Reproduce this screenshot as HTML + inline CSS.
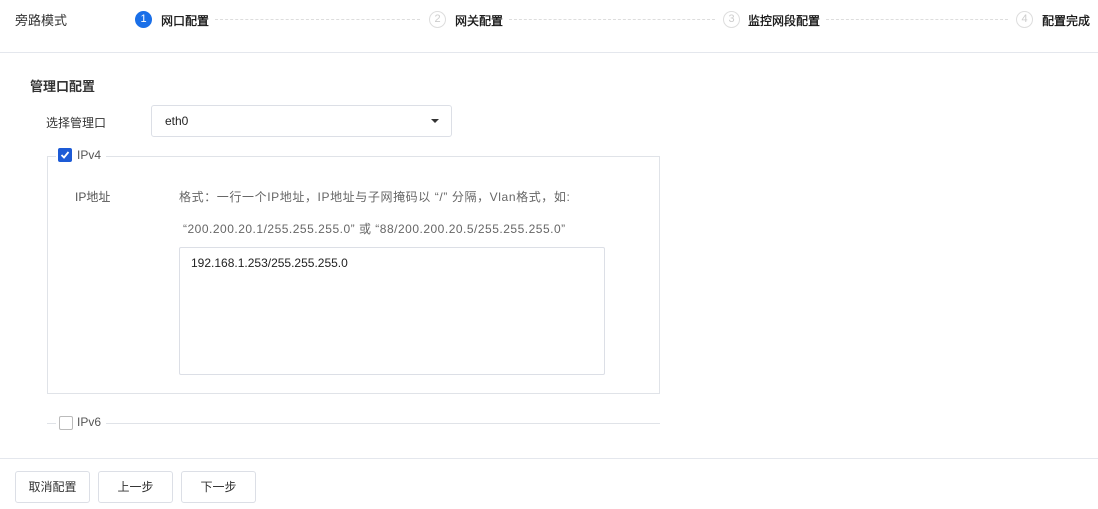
<!DOCTYPE html>
<html><head><meta charset="utf-8"><style>
*{margin:0;padding:0;box-sizing:border-box}
body{width:1098px;height:509px;background:#fff;position:relative;overflow:hidden;font-family:"Liberation Sans","Noto Sans CJK SC",sans-serif;font-size:12px;color:#333}
.a{position:absolute;white-space:nowrap}
.c{position:absolute;width:17px;height:17px;border-radius:50%;border:1px solid #ddd;color:#ccc;font-size:11px;text-align:center;line-height:15px}
.d{position:absolute;top:19px;height:0;border-top:1px dashed #ddd}
.st{font-size:12px;color:#111;top:12px;-webkit-text-stroke:0.3px #111}
.btn{position:absolute;top:471px;height:32px;border:1px solid #dcdfe6;border-radius:3px;text-align:center;line-height:30px;color:#333;font-size:12px}
.cb{position:absolute;width:14px;height:14px;border:1px solid #bbb;border-radius:2px;background:#fff}
</style></head><body>
<div class="a" style="left:15px;top:10px;font-size:13px;color:#333">旁路模式</div>
<div class="c" style="left:135px;top:11px;background:#1a6fe8;border-color:#1a6fe8;color:#fff">1</div>
<div class="a st" style="left:161px">网口配置</div>
<div class="d" style="left:215px;width:205px"></div>
<div class="c" style="left:429px;top:11px">2</div>
<div class="a st" style="left:455px">网关配置</div>
<div class="d" style="left:509px;width:206px"></div>
<div class="c" style="left:723px;top:11px">3</div>
<div class="a st" style="left:748px">监控网段配置</div>
<div class="d" style="left:826px;width:182px"></div>
<div class="c" style="left:1016px;top:11px">4</div>
<div class="a st" style="left:1042px">配置完成</div>
<div class="a" style="left:0;top:52px;width:1098px;border-top:1px solid #e4e7ed"></div>

<div class="a" style="left:30px;top:76px;font-size:13px;font-weight:bold;color:#333">管理口配置</div>
<div class="a" style="left:46px;top:114px">选择管理口</div>
<div class="a" style="left:151px;top:105px;width:301px;height:32px;border:1px solid #dcdfe6;border-radius:3px"></div>
<div class="a" style="left:165px;top:114px;color:#222">eth0</div>
<div class="a" style="left:431px;top:119px;width:0;height:0;border-left:4px solid transparent;border-right:4px solid transparent;border-top:4px solid #333"></div>

<div class="a" style="left:47px;top:156px;width:613px;height:238px;border:1px solid #e0e3e8"></div>
<div class="a" style="left:56px;top:146px;width:50px;height:18px;background:#fff"></div>
<div class="cb" style="left:58px;top:148px;background:#1d5bd6;border-color:#1d5bd6"><svg width="12" height="12" viewBox="0 0 12 12" style="position:absolute;left:0;top:0"><path d="M2.5 6 L5 8.5 L9.5 3" stroke="#fff" stroke-width="1.8" fill="none"/></svg></div>
<div class="a" style="left:77px;top:148px;color:#555">IPv4</div>
<div class="a" style="left:75px;top:188px;color:#555">IP地址</div>
<div class="a" style="left:179px;top:188px;color:#666;letter-spacing:0.6px">格式：一行一个IP地址，IP地址与子网掩码以 “/” 分隔，Vlan格式，如:</div>
<div class="a" style="left:183px;top:220px;color:#666;letter-spacing:0.5px">“200.200.20.1/255.255.255.0” 或 “88/200.200.20.5/255.255.255.0”</div>
<div class="a" style="left:179px;top:247px;width:426px;height:128px;border:1px solid #dcdfe6;border-radius:2px"></div>
<div class="a" style="left:191px;top:256px;color:#222">192.168.1.253/255.255.255.0</div>

<div class="a" style="left:47px;top:423px;width:613px;border-top:1px solid #e0e3e8"></div>
<div class="a" style="left:56px;top:414px;width:50px;height:18px;background:#fff"></div>
<div class="cb" style="left:59px;top:416px"></div>
<div class="a" style="left:77px;top:415px;color:#555">IPv6</div>

<div class="a" style="left:0;top:458px;width:1098px;border-top:1px solid #e4e7ed"></div>
<div class="btn" style="left:15px;width:75px">取消配置</div>
<div class="btn" style="left:98px;width:75px">上一步</div>
<div class="btn" style="left:181px;width:75px">下一步</div>
</body></html>
